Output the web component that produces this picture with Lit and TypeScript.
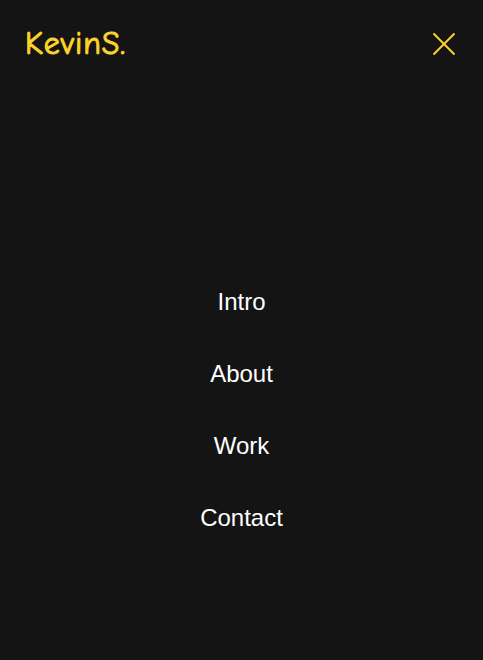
import { LitElement, html, css } from "lit";
import { customElement } from "lit/decorators.js";

@customElement("app-root")
export class AppRoot extends LitElement {
  static styles = css`
    :host { display: flex; flex-direction: column; height: 100vh; box-sizing: border-box; overflow: hidden; background: #141414; color: #fff; font-family: "Liberation Sans", Arial, sans-serif; }
    header { display: flex; justify-content: space-between; align-items: center; height: 88px; padding: 0 27px 0 25px; box-sizing: border-box; flex: none; }
    .logo { color: #fdd32a; font: 32px/40px "Comic Sans MS", "Comic Neue", "Comic Relief", cursive; letter-spacing: 0.9px; -webkit-text-stroke: 1px #fdd32a; }
    .close { display: flex; padding: 0; border: 0; background: none; color: #fdd32a; }
    nav { display: flex; flex-direction: column; align-items: center; gap: 44px; padding-top: 200px; font-size: 24px; line-height: 28px; }
  `;
  render() {
    return html`
      <header>
        <div class="logo">KevinS.</div>
        <button class="close" aria-label="Close menu">
          <svg width="24" height="24" viewBox="0 0 24 24" fill="none" stroke="currentColor" stroke-width="2"><path d="M1.5 1.5l21 21M22.5 1.5l-21 21" /></svg>
        </button>
      </header>
      <nav>${["Intro", "About", "Work", "Contact"].map((t) => html`<span>${t}</span>`)}</nav>
    `;
  }
}
